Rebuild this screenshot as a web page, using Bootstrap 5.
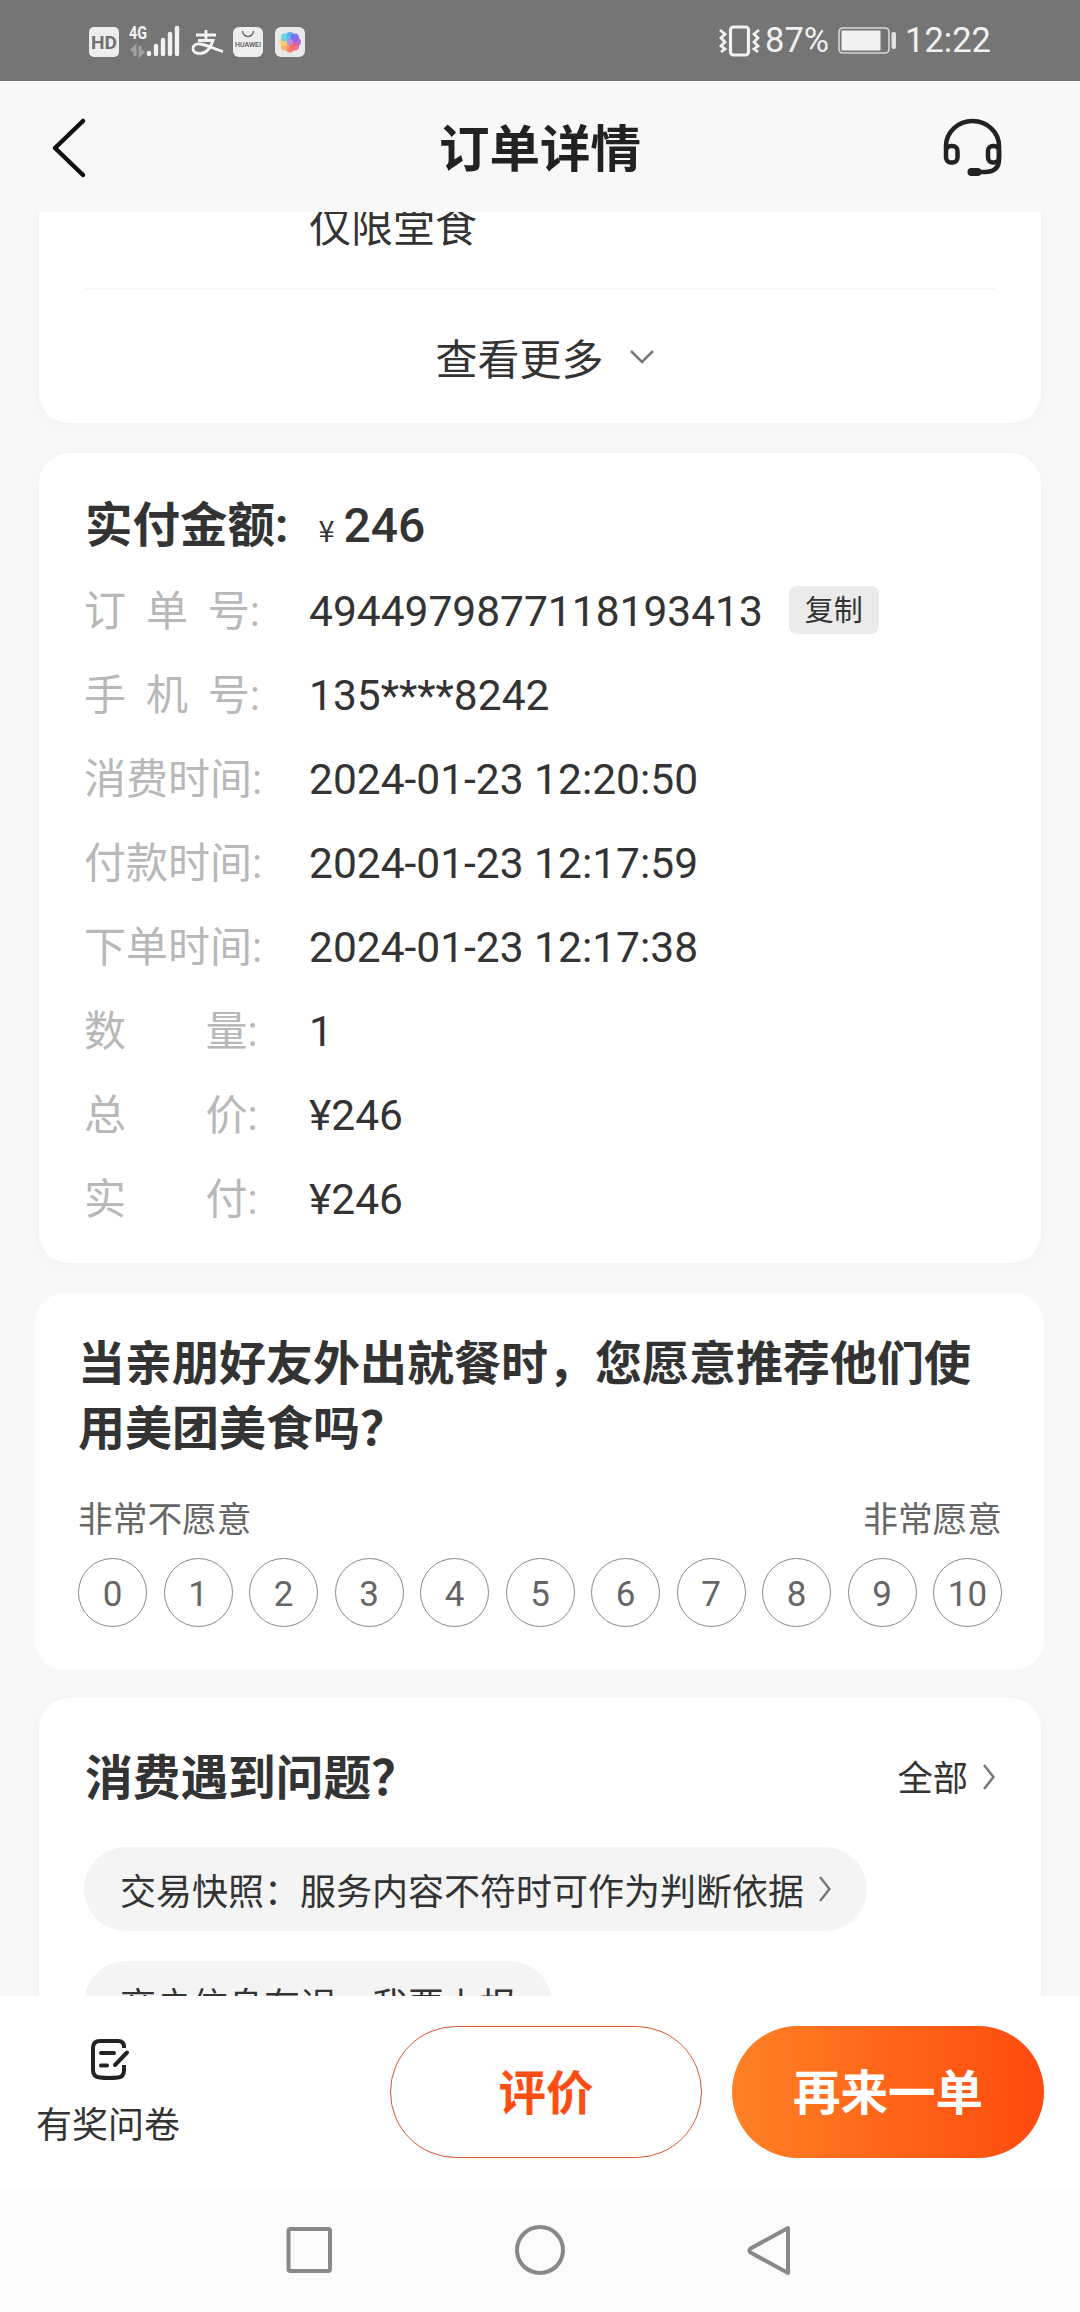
<!DOCTYPE html>
<html lang="zh-CN">
<head>
<meta charset="utf-8">
<meta name="viewport" content="width=device-width, initial-scale=1">
<title>订单详情</title>
<link href="https://cdn.jsdelivr.net/npm/bootstrap@5.3.0/dist/css/bootstrap.min.css" rel="stylesheet">
<style>
html,body{height:2312px;overflow:hidden}
body{font-family:Roboto,"Noto Sans CJK SC",sans-serif;color:#333;background:#f8f8f8;font-size:42.5px;line-height:84px}
svg{display:block;flex:none}
.status{height:81px;background:#757575;color:#f1f1f1;padding:0 89px 0 89px;font-size:34.5px;line-height:83px}
.topbar{height:131px;padding:2px 77px 0 51px}
.topbar-side{width:86px}
.page-title{font-size:50.5px;font-weight:700;line-height:70px;color:#222;padding-top:5px}
.feed{height:1784px}
.panel{background:#fff;border:0;border-radius:30px;margin:0 39px 30px;padding:0 46px;box-shadow:0 3px 14px 4px rgba(0,0,0,.02);color:#333}
.panel-first{margin-top:-30px;height:241px;font-size:42px}
.scope-text{padding-left:224px;height:106px;line-height:91px}
.rule-line{height:2px;background:#f7f7f7}
.more-row{height:133px;line-height:132px;gap:26px;padding-left:9px}
.more-text{padding-top:8px}
.panel-order{height:810px;padding-top:30px}
.pay-title{font-size:47.5px;font-weight:700;height:87px;line-height:86px}
.pay-sign{font-size:29px;margin-left:30px;margin-right:9px;font-weight:400;font-family:"Noto Sans CJK SC",sans-serif}
.pay-sum{font-size:48px;font-weight:500}
.field{height:84px}
.field-name{width:224px;color:#b8b8b8;white-space:nowrap;font-size:42px;margin-left:-1px;margin-right:1px}
.sp3{word-spacing:9.5px}.sp2{word-spacing:69px}
.copy-btn{width:90px;height:48px;line-height:50px;border-radius:8px;background:#ebebeb;font-size:29px;margin-left:26px;padding:0;border:0;color:#333}
.copy-wrap{margin-top:-5px}
.panel-survey{height:377px;margin:0 36px 28px 35px;padding:38px 42px 0 43px;box-shadow:none}
.survey-q{font-size:47px;line-height:65px;font-weight:700;margin:0;white-space:nowrap}
.survey-ends{font-size:34.7px;line-height:50px;color:#666;margin-top:34px}
.scores{margin-top:13px}
.score{width:69px;height:69px;border:1px solid #888;border-radius:50%;font-size:35px;line-height:71px;color:#666;text-align:center}
.panel-help{height:360px;padding-top:39px}
.help-head{height:80px;line-height:80px}
.help-title{font-size:47.7px;font-weight:700;padding-top:3px}
.help-all{font-size:35.3px;gap:15px}
.help-all-text{padding-top:4px}
.chip{display:flex;width:fit-content;height:84px;border-radius:42px;background:#f4f4f4;font-size:36px;line-height:84px;align-items:center;padding:0 36px;margin:30px 0 0 -1px;gap:15px;white-space:nowrap}
.chip-text{padding-top:8px}
.actions{height:192px;background:#fff;padding:30px 36px 0}
.quiz{width:144px;font-size:36px;line-height:50px;padding-top:11px;gap:20px;white-space:nowrap}
.quiz-icon{margin-left:3px}
.pill{width:312px;height:132px;border-radius:66px;font-size:47.5px;font-weight:700;padding:4px 0 0;line-height:126px}
.pill-line{border:1px solid #dc532c;color:#fc4e13;background:#fff}
.pill-fill{border:0;color:#fff;background:linear-gradient(90deg,#ff8125,#ff4a0e);line-height:128px;margin-left:30px}
.sysnav{height:124px;background:#fbfbfb}
</style>
</head>
<body>
<div class="d-flex flex-column">
<header class="status d-flex align-items-center justify-content-between">
  <svg width="217" height="40" viewBox="89 20 217 40">
    <rect x="89" y="26" width="30" height="30" rx="5" fill="#eee"/>
    <text x="91" y="48" font-size="19" font-weight="700" textLength="26" lengthAdjust="spacingAndGlyphs" fill="#707070">HD</text>
    <text x="129" y="38" font-size="19" font-weight="700" textLength="18" lengthAdjust="spacingAndGlyphs" fill="#f3f3f3">4G</text>
    <g stroke="#a2a2a2" stroke-width="3" fill="none"><path d="M135 55V46l-4 4M140 45v9l4-4"/></g>
    <g stroke="#f2f2f2" stroke-width="4.4" stroke-linecap="round"><path d="M149 52v1M156 45v8M163 39v14M170 33v20M177 27v26"/></g>
    <g fill="none" stroke="#f4f4f4" stroke-width="2.8"><path d="M196 34h20M206 29v9M198 39.5h15c-2 6-6 13-13 13-5 0-7-2-7-5s3-5 7-4.500c7 .8 13 4.500 23 7.500"/></g>
    <rect x="233" y="26" width="30" height="30" rx="6" fill="#eee"/>
    <path d="M242.500 30a5.500 5.500 0 0 0 11 0" stroke="#777" stroke-width="1.600" fill="none"/>
    <text x="235" y="46" font-size="6.500" font-weight="500" textLength="26" lengthAdjust="spacingAndGlyphs" fill="#555">HUAWEI</text>
    <rect x="275" y="26" width="30" height="30" rx="6" fill="#e9e9e9"/>
    <g fill-opacity=".85"><circle cx="290" cy="35" r="4" fill="#49a5ef"/><circle cx="295" cy="36.500" r="4" fill="#7263ed"/><circle cx="297" cy="41" r="4" fill="#a556e0"/><circle cx="295" cy="45.500" r="4" fill="#f05a82"/><circle cx="290" cy="47.500" r="4" fill="#fb6a59"/><circle cx="285" cy="45.500" r="4" fill="#ffa65b"/><circle cx="283" cy="41" r="4" fill="#fbd070"/><circle cx="285" cy="36.500" r="4" fill="#56cbea"/><circle cx="290" cy="41" r="3" fill="#b07be0"/></g>
  </svg>
  <div class="d-flex align-items-center">
    <svg width="42" height="34" viewBox="722 23 42 34" fill="none" stroke="#f1f1f1"><rect x="733.500" y="26" width="18" height="28" rx="3" stroke-width="3.200"/><path d="M723 29l5 4-4 4 4 4-4 4 4 3-4 3M762 29l-5 4 4 4-4 4 4 4-4 3 4 3" stroke-width="2.800"/></svg>
    <span class="ms-1">87%</span>
    <svg class="ms-2" width="60" height="30" viewBox="839 26 60 30"><rect x="841" y="28" width="50" height="25" rx="4" fill="none" stroke="#d8d8d8" stroke-width="1.600"/><path d="M843.500 30.500h39v20h-39z" fill="#f1f1f1"/><rect x="893.500" y="32" width="4.500" height="17" rx="2" fill="#e3e3e3"/></svg>
    <span class="ms-2">12:22</span>
  </div>
</header>
<nav class="topbar d-flex align-items-center justify-content-between">
  <div class="topbar-side"><svg width="36" height="62" viewBox="52 116 36 62" fill="none" stroke="#111" stroke-width="4.500" stroke-linecap="round" stroke-linejoin="round"><path d="M84 120L56 147l28 27"/></svg></div>
  <h1 class="page-title m-0">订单详情</h1>
  <svg width="60" height="60" viewBox="942 117 60 60" fill="none" stroke="#222" stroke-width="4.500"><path d="M945 149v-4a26.500 25 0 0 1 53 0v13c0 9-5 13-14 13h-10"/><rect x="945" y="145" width="11.500" height="16.500" rx="5"/><rect x="987" y="145" width="11" height="16.500" rx="5"/><path d="M970.500 171h6" stroke-width="8" stroke-linecap="round"/></svg>
</nav>
<main class="feed overflow-hidden">
  <section class="panel panel-first">
    <div class="scope-text">仅限堂食</div>
    <div class="rule-line"></div>
    <div class="more-row d-flex align-items-center justify-content-center"><span class="more-text">查看更多</span>
      <svg width="24" height="14" fill="none" stroke="#777" stroke-width="2.500"><path d="M1 1l11 11L23 1"/></svg></div>
  </section>
  <section class="panel panel-order">
    <div class="pay-title d-flex align-items-baseline">实付金额:<span class="pay-sign">¥</span><span class="pay-sum">246</span></div>
    <div class="field d-flex"><span class="field-name sp3">订 单 号:</span><span>4944979877118193413</span><span class="copy-wrap d-flex align-items-center"><button class="copy-btn">复制</button></span></div>
    <div class="field d-flex"><span class="field-name sp3">手 机 号:</span><span>135****8242</span></div>
    <div class="field d-flex"><span class="field-name">消费时间:</span><span>2024-01-23 12:20:50</span></div>
    <div class="field d-flex"><span class="field-name">付款时间:</span><span>2024-01-23 12:17:59</span></div>
    <div class="field d-flex"><span class="field-name">下单时间:</span><span>2024-01-23 12:17:38</span></div>
    <div class="field d-flex"><span class="field-name sp2">数 量:</span><span>1</span></div>
    <div class="field d-flex"><span class="field-name sp2">总 价:</span><span>¥246</span></div>
    <div class="field d-flex"><span class="field-name sp2">实 付:</span><span>¥246</span></div>
  </section>
  <section class="panel panel-survey">
    <h2 class="survey-q">当亲朋好友外出就餐时，您愿意推荐他们使<br>用美团美食吗？</h2>
    <div class="survey-ends d-flex justify-content-between"><span>非常不愿意</span><span>非常愿意</span></div>
    <div class="scores d-flex justify-content-between">
      <div class="score">0</div><div class="score">1</div><div class="score">2</div><div class="score">3</div><div class="score">4</div><div class="score">5</div><div class="score">6</div><div class="score">7</div><div class="score">8</div><div class="score">9</div><div class="score">10</div>
    </div>
  </section>
  <section class="panel panel-help">
    <div class="help-head d-flex justify-content-between align-items-center"><span class="help-title">消费遇到问题？</span>
      <span class="help-all d-flex align-items-center"><span class="help-all-text">全部</span><svg width="12" height="26" fill="none" stroke="#777" stroke-width="2.500"><path d="M1 1l9.500 12L1 25"/></svg></span></div>
    <div class="chip"><span class="chip-text">交易快照：服务内容不符时可作为判断依据</span><svg width="12" height="26" fill="none" stroke="#777" stroke-width="2.500"><path d="M1 1l9.500 12L1 25"/></svg></div>
    <div class="chip"><span class="chip-text">商户信息有误，我要上报</span></div>
  </section>
</main>
<footer class="actions d-flex">
  <div class="quiz d-flex flex-column align-items-center">
    <svg class="quiz-icon" width="40" height="44" viewBox="90 2037 40 44" fill="none" stroke="#222" stroke-width="4" stroke-linecap="round"><path d="M124 2048v-1q0-6-6-6h-18q-7 0-7 7v22q0 7 7 7.500 9 1 18 0 6-.5 6-7.500v-5" stroke-linecap="butt"/><path d="M101 2053h13M101 2065.500h6M115 2065l12-12.500"/></svg>
    <span>有奖问卷</span>
  </div>
  <button class="btn pill pill-line ms-auto">评价</button>
  <button class="btn pill pill-fill">再来一单</button>
</footer>
<div class="sysnav">
  <svg width="1080" height="124" viewBox="0 2188 1080 124" fill="none" stroke="#888" stroke-width="4"><rect x="288.500" y="2229" width="41.500" height="42" rx="2"/><circle cx="540" cy="2250" r="23"/><path d="M788 2228v45l-37.500-20.500q-2-2 0-4z" stroke-linejoin="round"/></svg>
</div>
</div>
<script src="https://cdn.jsdelivr.net/npm/bootstrap@5.3.0/dist/js/bootstrap.bundle.min.js"></script>
</body>
</html>
